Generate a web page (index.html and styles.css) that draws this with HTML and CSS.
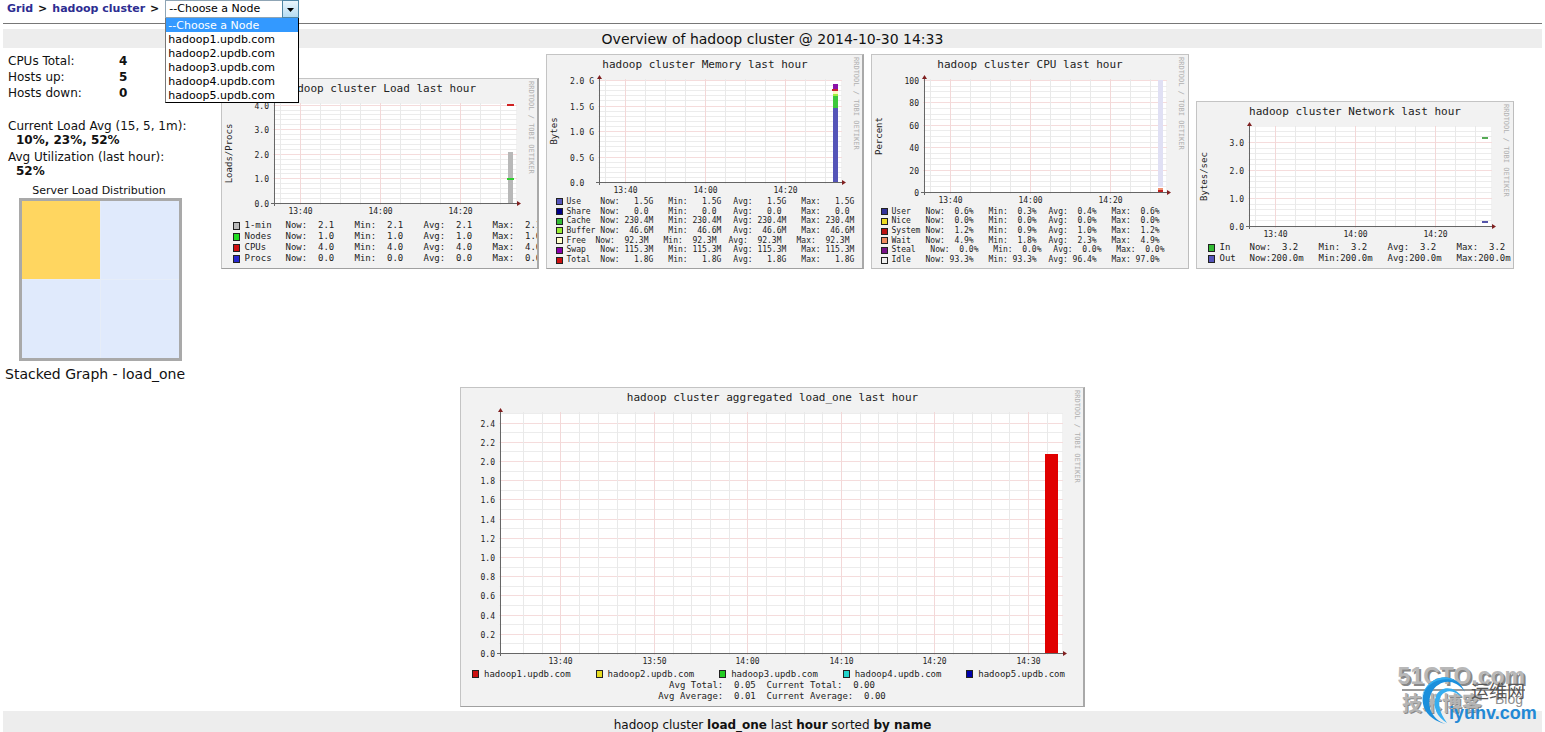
FILE: index.html
```html
<!DOCTYPE html>
<html lang="en">
<head>
<meta charset="utf-8">
<title>hadoop cluster - Ganglia</title>
<link rel="stylesheet" href="styles.css">
</head>
<body>
<header class="crumbs">
  <a href="#grid">Grid</a> <span>&gt;</span> <a href="#cluster">hadoop cluster</a> <span>&gt;</span>
  <div class="picker">
    <select class="picker-field" aria-label="Choose a Node">
      <option>--Choose a Node</option>
      <option>hadoop1.updb.com</option>
      <option>hadoop2.updb.com</option>
      <option>hadoop3.updb.com</option>
      <option>hadoop4.updb.com</option>
      <option>hadoop5.updb.com</option>
    </select>
    <span class="picker-arrow" aria-hidden="true"><svg width="7" height="4" viewBox="0 0 7 4"><path d="M0 0h7L3.5 4z"/></svg></span>
    <ul class="picker-list" role="listbox" aria-label="Nodes">
      <li class="is-active" role="option" aria-selected="true">--Choose a Node</li>
      <li role="option">hadoop1.updb.com</li>
      <li role="option">hadoop2.updb.com</li>
      <li role="option">hadoop3.updb.com</li>
      <li role="option">hadoop4.updb.com</li>
      <li role="option">hadoop5.updb.com</li>
    </ul>
  </div>
</header>
<h1 class="bar">Overview of hadoop cluster @ 2014-10-30 14:33</h1>
<main>
  <div class="overview">
    <section class="summary">
      <table class="counts">
        <tr><th scope="row">CPUs Total:</th><td>4</td></tr>
        <tr><th scope="row">Hosts up:</th><td>5</td></tr>
        <tr><th scope="row">Hosts down:</th><td>0</td></tr>
      </table>
      <dl class="averages">
        <dt>Current Load Avg (15, 5, 1m):</dt><dd>10%, 23%, 52%</dd>
        <dt>Avg Utilization (last hour):</dt><dd>52%</dd>
      </dl>
      <p class="caption">Server Load Distribution</p>
      <div class="distribution"><i class="busy"></i><i></i><i></i><i></i></div>
    </section>
    <section class="graphs">
      <figure class="graph" data-graph="load"></figure>
      <figure class="graph" data-graph="memory"></figure>
      <figure class="graph graph-thin" data-graph="cpu"></figure>
      <figure class="graph graph-thin" data-graph="network"></figure>
    </section>
  </div>
  <h2 class="stacked-title">Stacked Graph - load_one</h2>
  <figure class="graph graph-wide" data-graph="stacked"></figure>
</main>
<footer class="bar bar-small">hadoop cluster&nbsp;<b>load_one</b>&nbsp;last&nbsp;<b>hour</b>&nbsp;sorted&nbsp;<b>by name</b></footer>
<svg class="watermark" width="165" height="92" viewBox="0 0 165 92">
  <g class="wm-name"><text class="wm-shade" x="147" y="46" text-anchor="end">51CTO.com</text><text x="145" y="44" text-anchor="end">51CTO.com</text></g>
  <path d="M22 50H145" stroke="#9a9a9a" stroke-width="2"/>
  <g class="wm-blog"><text class="wm-shade" x="23" y="72">技术博客</text><text x="22" y="71">技术博客</text></g>
  <text class="wm-en" x="115" y="64">Blog</text>
  <text class="wm-cn" x="91" y="58">运维网</text>
  <path d="M85 52C78 34 56 32 46 48C38 61 44 79 66 84C50 79 46 63 52 52C59 39 75 38 85 52Z" fill="#1b8fdc"/>
  <path d="M76 41C62 32 44 42 42 58C44 46 58 35 76 41Z" fill="#35aef0"/>
  <path d="M82 58C76 46 61 45 56 56C52 67 57 77 67 83C60 73 57 64 61 56C66 49 75 50 82 58Z" fill="#35aef0"/>
  <text class="wm-url" x="69" y="79">iyunv.com</text>
</svg>
<script src="graphs.js"></script>
</body>
</html>
```
FILE: styles.css
```css
* { box-sizing: border-box; }
body {
  margin: 0 3px;
  background: #fff;
  color: #111;
  font: 11px/14px "DejaVu Sans", Verdana, sans-serif;
  position: relative;
}
.crumbs {
  display: flex;
  align-items: center;
  gap: 5px;
  height: 24px;
  padding: 0 4px 5px;
  border-bottom: 1px solid #777;
  font-weight: bold;
}
.crumbs a { color: #2d2d91; text-decoration: none; }
.picker { position: relative; width: 134px; height: 18px; margin-left: 1px; font-weight: normal; }
.picker-field {
  appearance: none;
  display: block;
  width: 100%;
  height: 18px;
  padding: 0 0 0 3px;
  border: 1px solid #8fa5b5;
  border-radius: 0;
  background: #fff;
  color: #000;
  font: inherit;
}
.picker-arrow {
  position: absolute;
  top: 0;
  right: 0;
  width: 17px;
  height: 18px;
  display: grid;
  place-items: center;
  padding-top: 2px;
  border: 1px solid #4f86a5;
  background: linear-gradient(#eaf6fd, #b5dcf2);
  pointer-events: none;
}
.picker-list {
  position: absolute;
  z-index: 2;
  top: 18px;
  left: 0;
  width: 134px;
  margin: 0;
  padding: 0;
  list-style: none;
  border: 1px solid #000;
  border-top: 0;
  border-left-color: #777;
  background: #fff;
  color: #000;
}
.picker-list li { height: 14px; padding-left: 2px; line-height: 15px; white-space: nowrap; }
.picker-list .is-active { background: #3399ff; color: #fff; }
.bar {
  display: flex;
  align-items: center;
  justify-content: center;
  height: 19px;
  margin: 5px 0 0;
  background: #ededed;
  font-size: 14px;
  font-weight: normal;
}
.overview { display: flex; gap: 7px; padding-top: 5px; align-items: flex-start; }
.summary { width: 188px; flex: none; padding-left: 5px; }
.counts { border-collapse: collapse; font-size: 12px; }
.counts th, .counts td { height: 16px; padding: 0; text-align: left; }
.counts th { width: 111px; font-weight: normal; }
.counts td { font-weight: bold; }
.averages { margin: 18px 0 0; font-size: 12px; }
.averages dd { margin: 0 0 3px 8px; font-weight: bold; }
.caption { margin: 6px 0 0; padding-right: 1px; text-align: center; }
.distribution {
  display: grid;
  grid-template-columns: 1fr 1fr;
  gap: 1px;
  width: 163px;
  height: 163px;
  margin-left: 11px;
  border: 3px solid #a9a9a9;
  background: #e6edf8;
}
.distribution i { background: #e0eafc; }
.distribution .busy { background: #ffd660; }
.graphs { flex: 1; display: flex; justify-content: center; align-items: flex-end; gap: 7px; height: 216px; padding-right: 6px; }
.graph {
  flex: none;
  width: 318px;
  margin: 0;
  border: 1px solid #c4c4c4;
  border-right: 2px solid #a9a9a9;
  border-bottom-color: #a0a0a0;
  background: #f2f2f2;
  overflow: hidden;
  color: #222;
  font-family: "DejaVu Sans Mono", monospace;
}
.graph-thin { border-right: 1px solid #bdbdbd; border-bottom-color: #bdbdbd; }
.graph svg { display: block; overflow: hidden; }
.graph text { fill: #222; font-size: 8px; }
.graph .title { font-size: 11px; }
.graph .unit { font-size: 9px; }
.graph .credit { font-size: 7px; fill: #b0b0b0; }
.legend { border-collapse: collapse; table-layout: fixed; margin-left: 11px; font-size: 9px; line-height: 11px; }
.legend th, .legend td { padding: 0; font-weight: normal; text-align: left; white-space: pre; }
.legend-small { margin-left: 9px; font-size: 8px; line-height: 8px; }
.swatch { display: block; width: 7px; height: 8px; border: 1px solid #222; }
.legend-small .swatch { height: 7px; }
.stacked-title { margin: 6px 0 5px 2px; font-size: 14px; line-height: 15px; font-weight: normal; }
.graph-wide { width: 625px; margin: 0 auto; padding-bottom: 4px; }
.hosts { display: flex; justify-content: space-between; margin: 0; padding: 0 18px 0 11px; list-style: none; font-size: 9px; line-height: 12px; }
.hosts li { display: flex; align-items: center; gap: 5px; }
.totals { margin: 0; font-size: 9px; line-height: 11px; text-align: center; white-space: pre; }
.bar-small { height: 21px; margin-top: 4px; padding-top: 7px; font-size: 12px; }
.watermark { position: absolute; right: -3px; bottom: 0; font-family: "Liberation Sans", "Noto Sans CJK SC", sans-serif; }
.wm-name { font-size: 23px; font-weight: bold; fill: #b8b8b8; }
.wm-blog { font-size: 20px; font-weight: bold; fill: #b4b4b4; }
.wm-shade { fill: #888; }
.wm-en { font-size: 14px; fill: #909090; }
.wm-cn { font-size: 18px; fill: #555; }
.wm-url { font-size: 18px; font-weight: bold; fill: #2389d5; }
```
FILE: graphs.js
```js
const hourTicks = { first: 59, step: 20, count: 12, labels: { 1: "13:40", 5: "14:00", 9: "14:20" } };

const graphs = {
  load: {
    title: "hadoop cluster Load last hour", unit: "Loads/Procs", svgHeight: 141,
    width: 318, left: 53, right: 295, top: 26, zero: 125, pixels: 24.6, minor: 0.2, max: 4,
    labels: [[0, "0.0"], [1, "1.0"], [2, "2.0"], [3, "3.0"], [4, "4.0"]], ticks: hourTicks,
    shapes: [[287, 74, 5, 51, "#b8b8b8"], [286, 100, 7, 2, "#2fce2f"], [286, 26, 7, 2, "#d02020"]],
    columns: [12, 41, 69, 69, 69, 60], style: "",
    legend: [
      ["#bbbbbb", "1-min", "Now:  2.1", "Min:  2.1", "Avg:  2.1", "Max:  2.1"],
      ["#22dd22", "Nodes", "Now:  1.0", "Min:  1.0", "Avg:  1.0", "Max:  1.0"],
      ["#d01010", "CPUs", "Now:  4.0", "Min:  4.0", "Avg:  4.0", "Max:  4.0"],
      ["#2828d0", "Procs", "Now:  0.0", "Min:  0.0", "Avg:  0.0", "Max:  0.0"]]
  },
  memory: {
    title: "hadoop cluster Memory last hour", unit: "Bytes", svgHeight: 142,
    width: 318, left: 53, right: 295, top: 26, zero: 128, pixels: 51, minor: 0.1, max: 2,
    labels: [[0, "0.0  "], [0.5, "0.5 G"], [1, "1.0 G"], [1.5, "1.5 G"], [2, "2.0 G"]], ticks: hourTicks,
    shapes: [[287, 54, 5, 74, "#5555b8"], [287, 42, 5, 12, "#3cc83c"], [287, 40, 5, 2, "#a0f040"],
      [287, 37, 5, 3, "#fff8c0"], [287, 30, 5, 5, "#8a10a8"], [286, 35, 6, 2, "#c82030"]],
    columns: [11, 29, 68, 65, 68, 66], style: "legend-small", legendHeight: 68,
    legend: [
      ["#5555bb", "Use", " Now:   1.5G", " Min:   1.5G", " Avg:   1.5G", " Max:   1.5G"],
      ["#000088", "Share", " Now:   0.0", " Min:   0.0", " Avg:   0.0", " Max:   0.0"],
      ["#33bb33", "Cache", " Now: 230.4M", " Min: 230.4M", " Avg: 230.4M", " Max: 230.4M"],
      ["#99ee33", "Buffer", " Now:  46.6M", " Min:  46.6M", " Avg:  46.6M", " Max:  46.6M"],
      ["#ffffcc", "Free", "Now:  92.3M", "Min:  92.3M", "Avg:  92.3M", "Max:  92.3M"],
      ["#8800aa", "Swap", " Now: 115.3M", " Min: 115.3M", " Avg: 115.3M", " Max: 115.3M"],
      ["#cc1111", "Total", " Now:   1.8G", " Min:   1.8G", " Avg:   1.8G", " Max:   1.8G"]]
  },
  cpu: {
    title: "hadoop cluster CPU last hour", unit: "Percent", svgHeight: 152,
    width: 318, left: 53, right: 295, top: 26, zero: 138, pixels: 1.12, minor: 5, max: 100,
    labels: [[0, "0"], [20, "20"], [40, "40"], [60, "60"], [80, "80"], [100, "100"]], ticks: hourTicks,
    shapes: [[287, 26, 5, 107, "#e0e0f4"], [287, 134, 5, 2, "#f09070"], [287, 136, 5, 2, "#c02020"]],
    columns: [11, 34, 63, 60, 63, 76], style: "legend-small", legendHeight: 58,
    legend: [
      ["#333399", "User", "Now:  0.6%", "Min:  0.3%", "Avg:  0.4%", "Max:  0.6%"],
      ["#eedd22", "Nice", "Now:  0.0%", "Min:  0.0%", "Avg:  0.0%", "Max:  0.0%"],
      ["#bb1111", "System", "Now:  1.2%", "Min:  0.9%", "Avg:  1.0%", "Max:  1.2%"],
      ["#ee8a60", "Wait", "Now:  4.9%", "Min:  1.8%", "Avg:  2.3%", "Max:  4.9%"],
      ["#771188", "Steal", " Now:  0.0%", " Min:  0.0%", " Avg:  0.0%", " Max:  0.0%"],
      ["#eeeeee", "Idle", "Now: 93.3%", "Min: 93.3%", "Avg: 96.4%", "Max: 97.0%"]]
  },
  network: {
    title: "hadoop cluster Network last hour", unit: "Bytes/sec", svgHeight: 140,
    width: 318, left: 53, right: 295, top: 26, zero: 125, pixels: 28, minor: 0.2, max: 3.5,
    labels: [[0, "0.0"], [1, "1.0"], [2, "2.0"], [3, "3.0"]], ticks: hourTicks,
    shapes: [[286, 36, 6, 2, "#55aa55"], [286, 120, 6, 2, "#5555aa"]],
    columns: [12, 30, 69, 69, 69, 60], style: "",
    legend: [
      ["#33bb33", "In", "Now:  3.2", "Min:  3.2", "Avg:  3.2", "Max:  3.2"],
      ["#5555bb", "Out", "Now:200.0m", "Min:200.0m", "Avg:200.0m", "Max:200.0m"]]
  },
  stacked: {
    title: "hadoop cluster aggregated load_one last hour", unit: "", svgHeight: 280,
    width: 625, left: 40, right: 602, top: 26, zero: 266, pixels: 96, minor: 0.1, max: 2.5,
    labels: Array.from({ length: 13 }, (_, i) => [i / 5, (i / 5).toFixed(1)]),
    ticks: { first: 63, step: 18.7, count: 29, labels: { 2: "13:40", 7: "13:50", 12: "14:00", 17: "14:10", 22: "14:20", 27: "14:30" } },
    shapes: [[585, 67, 13, 199, "#e00000"]],
    hosts: [["#cc1111", "hadoop1.updb.com"], ["#e6dc20", "hadoop2.updb.com"], ["#22cc22", "hadoop3.updb.com"],
      ["#22d5cc", "hadoop4.updb.com"], ["#0000aa", "hadoop5.updb.com"]],
    totals: ["Avg Total:  0.05  Current Total:  0.00", "Avg Average:  0.01  Current Average:  0.00"]
  }
};

function drawPlot(g) {
  const parts = [];
  const line = (x1, y1, x2, y2, color) =>
    parts.push(`<path d="M${x1} ${y1}L${x2} ${y2}" stroke="${color}" shape-rendering="crispEdges"/>`);
  const rowY = value => Math.round(g.zero - value * g.pixels) + 0.5;
  const isMajor = value => g.labels.some(([v]) => Math.abs(v - value) < 0.001);

  parts.push(`<rect x="${g.left}" y="${g.top}" width="${g.right - g.left}" height="${g.zero - g.top}" fill="#fff"/>`);
  for (let i = 1; i * g.minor <= g.max + 0.001; i++) {
    const y = rowY(i * g.minor);
    line(g.left - 1, y, g.right + 1, y, isMajor(i * g.minor) ? "#f5dcdc" : "#ececec");
  }
  for (let i = 0; i < g.ticks.count; i++) {
    const x = Math.round(g.ticks.first + i * g.ticks.step) + 0.5;
    const label = g.ticks.labels[i];
    line(x, g.top - 1, x, g.zero + 2, label ? "#f3d8d8" : "#e9e9e9");
    if (label) parts.push(`<text x="${x}" y="${g.zero + 11}" text-anchor="middle">${label}</text>`);
  }
  g.shapes.forEach(([x, y, w, h, fill]) =>
    parts.push(`<rect x="${x}" y="${y}" width="${w}" height="${h}" fill="${fill}"/>`));

  line(g.left + 0.5, g.top - 2, g.left + 0.5, g.zero + 3, "#666");
  line(g.left - 3, g.zero + 0.5, g.right + 2, g.zero + 0.5, "#666");
  parts.push(`<path d="M${g.left - 2} ${g.top - 1}h5l-2.5-4z" fill="#802020"/>`);
  parts.push(`<path d="M${g.right + 1} ${g.zero - 2}v5l4-2.5z" fill="#802020"/>`);
  g.labels.forEach(([value, label]) =>
    parts.push(`<text style="white-space:pre" x="${g.left - 5}" y="${rowY(value) + 3}" text-anchor="end">${label}</text>`));

  const middle = (g.top + g.zero) / 2;
  parts.push(`<text class="title" x="${g.width / 2}" y="14" text-anchor="middle">${g.title}</text>`);
  parts.push(`<text class="unit" transform="translate(11 ${middle}) rotate(-90)" text-anchor="middle">${g.unit}</text>`);
  parts.push(`<text class="credit" transform="translate(${g.width - 10} 3) rotate(90)">RRDTOOL / TOBI OETIKER</text>`);
  return `<svg width="${g.width - 3}" height="${g.svgHeight}" viewBox="1 1 ${g.width - 3} ${g.svgHeight}" fill="none">${parts.join("")}</svg>`;
}

const swatch = color => `<span class="swatch" style="background:${color}"></span>`;

function drawLegend(g) {
  const cols = g.columns.map(w => `<col style="width:${w}px">`).join("");
  const rows = g.legend.map(([color, name, ...cells]) =>
    `<tr><td>${swatch(color)}</td><th scope="row">${name}</th>${cells.map(c => `<td>${c}</td>`).join("")}</tr>`).join("");
  const total = g.columns.reduce((a, b) => a + b, 0);
  const height = g.legendHeight || g.legend.length * 11;
  return `<table class="legend ${g.style}" style="width:${total}px;height:${height}px"><colgroup>${cols}</colgroup>${rows}</table>`;
}

function drawHosts(g) {
  const items = g.hosts.map(([color, name]) => `<li>${swatch(color)}${name}</li>`).join("");
  return `<ul class="hosts">${items}</ul>` + g.totals.map(t => `<p class="totals">${t}</p>`).join("");
}

document.querySelectorAll("[data-graph]").forEach(figure => {
  const g = graphs[figure.dataset.graph];
  figure.innerHTML = drawPlot(g) + (g.legend ? drawLegend(g) : drawHosts(g));
  if (g.legend) figure.style.paddingBottom = g.legendHeight ? "3px" : "4px";
});
```
